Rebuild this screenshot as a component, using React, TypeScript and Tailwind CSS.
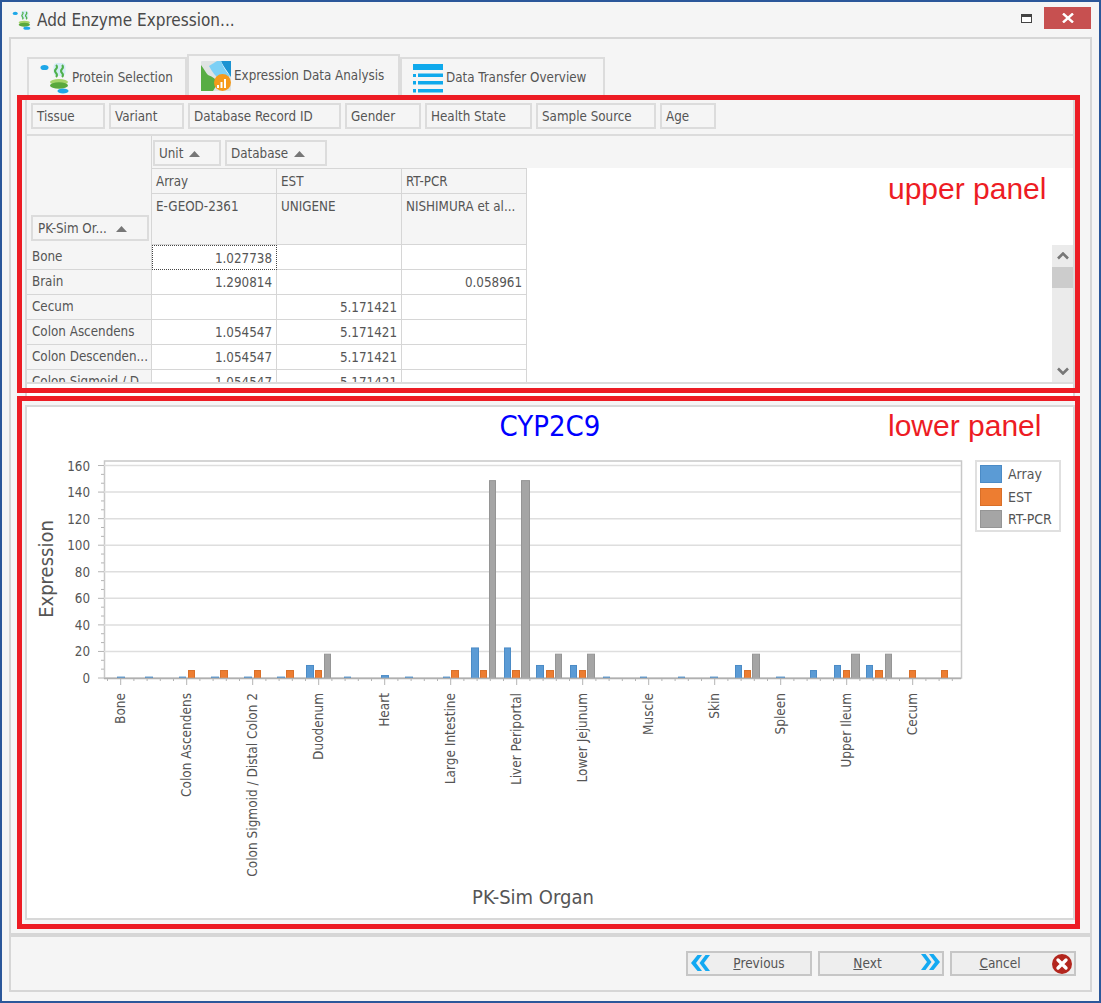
import React from "react";

const font = "font-['DejaVu_Sans','Liberation_Sans',sans-serif] [font-stretch:condensed]";
const cellLine = "border-r border-b border-[#d6d6d6]";

const filters = [
  { label: "Tissue", w: "w-[74px]" },
  { label: "Variant", w: "w-[75px]" },
  { label: "Database Record ID", w: "w-[153px]" },
  { label: "Gender", w: "w-[76px]" },
  { label: "Health State", w: "w-[107px]" },
  { label: "Sample Source", w: "w-[120px]" },
  { label: "Age", w: "w-[56px]" },
];

const rows = [
  ["Bone", "1.027738", "", ""],
  ["Brain", "1.290814", "", "0.058961"],
  ["Cecum", "", "5.171421", ""],
  ["Colon Ascendens", "1.054547", "5.171421", ""],
  ["Colon Descenden...", "1.054547", "5.171421", ""],
  ["Colon Sigmoid / D...", "1.054547", "5.171421", ""],
];

const colors: Record<string, { fill: string; line: string }> = {
  a: { fill: "#5b9bd5", line: "#4b8bc6" },
  e: { fill: "#ed7d31", line: "#d96f28" },
  r: { fill: "#a5a5a5", line: "#959595" },
};

// x, width, series, value
const bars: [number, number, string, number][] = [
  [117, 8, "a", 1.05], [145, 8, "a", 1.05],
  [179, 7, "a", 1.05], [188, 7, "e", 6],
  [211, 8, "a", 1.05], [220, 8, "e", 6],
  [244, 8, "a", 1.05], [254, 7, "e", 6],
  [277, 8, "a", 1.05], [286, 8, "e", 6],
  [306, 8, "a", 9.8], [315, 7, "e", 6], [324, 7, "r", 18.3],
  [344, 7, "a", 1.05], [381, 8, "a", 2.2], [405, 8, "a", 1.05],
  [443, 7, "a", 1.05], [451, 8, "e", 6],
  [471, 8, "a", 23], [480, 7, "e", 6], [489, 7, "r", 149],
  [504, 7, "a", 23], [512, 8, "e", 6], [521, 9, "r", 149],
  [536, 8, "a", 9.8], [546, 8, "e", 6], [555, 7, "r", 18.3],
  [570, 7, "a", 9.8], [579, 7, "e", 6], [587, 8, "r", 18.3],
  [603, 7, "a", 1.05], [640, 7, "a", 1.05], [678, 7, "a", 1.05], [710, 8, "a", 1.05],
  [735, 7, "a", 9.8], [744, 7, "e", 6], [752, 8, "r", 18.3],
  [776, 9, "a", 1.05], [810, 7, "a", 6],
  [834, 7, "a", 9.8], [843, 7, "e", 6], [851, 9, "r", 18.3],
  [866, 7, "a", 9.8], [875, 8, "e", 6], [885, 7, "r", 18.3],
  [909, 7, "e", 6], [941, 7, "e", 6],
];

const categories = [
  "Bone", "Colon Ascendens", "Colon Sigmoid / Distal Colon 2", "Duodenum", "Heart", "Large Intestine",
  "Liver Periportal", "Lower Jejunum", "Muscle", "Skin", "Spleen", "Upper Ileum", "Cecum",
];

const yTicks = [0, 20, 40, 60, 80, 100, 120, 140, 160];
const toY = (v: number) => 678 - v * 1.328;

const SortUp = () => (
  <svg width="11" height="6" viewBox="0 0 11 6" className="shrink-0">
    <path d="M5.5 0 L11 6 H0 Z" fill="#777" />
  </svg>
);

const FieldButton = ({ label, w, sort }: { label: string; w: string; sort?: boolean }) => (
  <div className={`${w} h-[26px] flex items-center gap-[6px] pl-[4px] pt-[2px] border-2 border-[#dcdcdc] bg-[#f5f5f5] shrink-0`}>
    <span className="whitespace-nowrap">{label}</span>
    {sort && <SortUp />}
  </div>
);

const ProteinIcon = ({ w, h }: { w: number; h: number }) => (
  <svg width={w} height={h} viewBox="0 0 28 32">
    <ellipse cx="4" cy="5.5" rx="4" ry="2.6" fill="#1ea7e8" />
    <rect x="13" y="1" width="12" height="13" rx="4" fill="#d3ecf6" />
    <path d="M15.5 3 q2 2 0 4 q-2 2 0 4 q2 2 0 4 M21.5 3 q2 2 0 4 q-2 2 0 4 q2 2 0 4" fill="none" stroke="#4fb04a" strokeWidth="2" />
    <ellipse cx="18.5" cy="20" rx="9" ry="3" fill="#a5d46a" />
    <ellipse cx="18.5" cy="23.5" rx="9" ry="3.2" fill="#5aa83c" />
    <ellipse cx="22.5" cy="29" rx="5.5" ry="2.6" fill="#1ea7e8" />
  </svg>
);

const AnalysisIcon = () => (
  <svg width="30" height="30" viewBox="0 0 30 30">
    <rect width="30" height="30" rx="1" fill="#dfe3e3" />
    <path d="M12 2 H28 V15 C24 12 21 13 18 9 Z" fill="#fff" />
    <path d="M20 0 H30 V16 C27 11 23 7 20 0 Z" fill="#1c93d2" />
    <path d="M8 5 L16 0 H20 C22 6 25 10 29 15 L20 19 C15 16 11 11 8 5 Z" fill="#7cd0f5" />
    <path d="M0 4 C3 8 5 12 7 14 C12 16 15 18 17 22 L12 30 H0 Z" fill="#58ad43" />
    <circle cx="21.5" cy="21.5" r="8.5" fill="#f59a1b" />
    <path d="M16 27v-3h2v3zM19.5 27v-6h2v6zM23 27v-9h2v9z" fill="#fff" />
  </svg>
);

const TransferIcon = () => (
  <svg width="30" height="30" viewBox="0 0 30 30">
    <rect y="1" width="30" height="6" fill="#0fa9ec" />
    <rect y="11" width="3" height="3" fill="#0fa9ec" />
    <rect x="5" y="10.5" width="25" height="3.5" fill="#0fa9ec" />
    <rect y="18" width="3" height="3.5" fill="#0fa9ec" />
    <rect x="5" y="18" width="25" height="3.5" fill="#0fa9ec" />
    <rect y="26" width="3" height="3.5" fill="#0fa9ec" />
    <rect x="5" y="26" width="25" height="3.5" fill="#0fa9ec" />
  </svg>
);

const DoubleChevron = ({ flip }: { flip?: boolean }) => (
  <svg width="19" height="16" viewBox="0 0 19 16" className={flip ? "-scale-x-100" : ""}>
    <path d="M0 0h4.5l6 8-6 8H0l6-8zM8 0h4.5l6.5 8-6.5 8H8l6-8z" fill="#13a9f2" />
  </svg>
);

const Chart = () => (
  <svg width="940" height="478" viewBox="27 440 940 478" className="shrink-0">
    <g fontFamily="'DejaVu Sans','Liberation Sans',sans-serif" style={{ fontStretch: "condensed" }} fill="#555">
      <text x="53" y="569" fontSize="20" textAnchor="middle" transform="rotate(-90 53 569)">Expression</text>
      {yTicks.map((t) => (
        <text key={t} x="90" y={toY(t) + 5} fontSize="13.3" textAnchor="end">{t}</text>
      ))}
      {categories.map((c, i) => (
        <text key={c} x={125 + 66 * i} y="693" fontSize="13.5" textAnchor="end" transform={`rotate(-90 ${125 + 66 * i} 693)`}>{c}</text>
      ))}
      <text x="533" y="904" fontSize="20" textAnchor="middle">PK-Sim Organ</text>
    </g>
    <rect x="104.5" y="461" width="857" height="217" fill="#fff" stroke="#c8c8c8" strokeWidth="1.5" />
    {yTicks.slice(1).map((t) => (
      <line key={t} x1="104" x2="961" y1={toY(t)} y2={toY(t)} stroke="#dedede" strokeWidth="1.5" />
    ))}
    {Array.from({ length: 25 }, (_, i) => toY(i * (20 / 3))).map((y, i) => (
      <line key={i} x1={i % 3 === 0 ? 98 : 101} x2="104" y1={y} y2={y} stroke="#b4b4b4" />
    ))}
    {Array.from({ length: 65 }, (_, i) => 107.5 + 13.2 * i).map((x, i) => (
      <line key={i} x1={x} x2={x} y1="678" y2={(i - 1) % 5 === 0 ? 685 : 681} stroke="#b4b4b4" />
    ))}
    {bars.map(([x, w, s, v], i) => (
      <rect key={i} x={x + 0.5} y={toY(v) + 0.5} width={w - 1} height={678 - toY(v)} fill={colors[s].fill} stroke={colors[s].line} />
    ))}
    <line x1="104" x2="961" y1="678.5" y2="678.5" stroke="#b0b0b0" strokeWidth="1.5" />
  </svg>
);

const Legend = () => (
  <div className="w-[86px] h-[72px] mt-[20px] ml-[8px] border-2 border-[#e0e0e0] flex flex-col gap-[4.5px] pt-[3px] pl-[3px] shrink-0 text-[14px]">
    {[
      ["Array", "bg-[#5b9bd5] border-[#4b8bc6]"],
      ["EST", "bg-[#ed7d31] border-[#d96f28]"],
      ["RT-PCR", "bg-[#a5a5a5] border-[#959595]"],
    ].map(([name, swatch]) => (
      <div key={name} className="flex items-center gap-[6px] h-[18px]">
        <div className={`w-[22px] h-[18px] border ${swatch}`} />
        <span>{name}</span>
      </div>
    ))}
  </div>
);

const Tab = ({ label, icon, active, w }: { label: string; icon: React.ReactNode; active?: boolean; w: string }) => (
  <div
    className={`${w} flex items-center gap-[3px] border-2 border-b-0 border-[#dcdcdc] ${
      active ? "h-[42px] pl-[12px]" : "h-[39px] pl-[11px]"
    }`}
  >
    {icon}
    <span className="whitespace-nowrap">{label}</span>
  </div>
);

const DialogButton = ({ children, left, right, pad }: { children: React.ReactNode; left?: React.ReactNode; right?: React.ReactNode; pad: string }) => (
  <div className={`relative w-[126px] h-[25px] border-2 border-[#c6c6c6] bg-[#eeeeee] flex items-center justify-center text-[13.5px] ${pad}`}>
    {left && <div className="absolute left-[3px] top-[2px]">{left}</div>}
    <span>{children}</span>
    {right && <div className="absolute right-[2px] top-[1px]">{right}</div>}
  </div>
);

export default function App() {
  return (
    <div className={`relative w-[1101px] h-[1003px] overflow-hidden bg-[#f5f5f5] shadow-[inset_0_0_0_2px_#2b579a] text-[13.3px] leading-none text-[#555555] ${font}`}>
      {/* title bar */}
      <div className="h-[37px] flex items-center pl-[12px] pr-[10px] pt-[3px]">
        <ProteinIcon w={19} h={20} />
        <span className="ml-[6px] text-[17px] text-[#4a4a4a]">Add Enzyme Expression...</span>
        <div className="ml-auto mr-[12px] w-[11px] h-[9px] border border-t-[3px] border-[#444] bg-white mb-[3px]" />
        <div className="w-[47px] h-[22px] bg-[#c75050] flex items-center justify-center mb-[4px]">
          <svg width="12" height="10" viewBox="0 0 12 10">
            <path d="M1 0.5 L11 9.5 M11 0.5 L1 9.5" stroke="#fff" strokeWidth="2.4" />
          </svg>
        </div>
      </div>

      {/* main panel */}
      <div className="ml-[9px] w-[1083px] h-[898px] border-2 border-[#d6d6d6]">
        <div className="h-[57px] pl-[16px] pt-[15px] flex items-end">
          <Tab w="w-[160px]" label="Protein Selection" icon={<ProteinIcon w={29} h={32} />} />
          <Tab w="w-[213px]" label="Expression Data Analysis" icon={<AnalysisIcon />} active />
          <Tab w="w-[205px]" label="Data Transfer Overview" icon={<TransferIcon />} />
        </div>

        <div className="ml-[14px] w-[1050px]">
          {/* upper panel */}
          <div className="h-[300px] border-x-2 border-[#d8d8d8] bg-white flex flex-col">
            <div className="h-[40px] shrink-0 bg-[#f5f5f5] border-b-2 border-[#dcdcdc] pl-[4px] pt-[7px] flex gap-[4px]">
              {filters.map((f) => (
                <FieldButton key={f.label} label={f.label} w={f.w} />
              ))}
            </div>
            <div className="h-[109px] shrink-0 flex">
              <div className="w-[125px] bg-[#f5f5f5] flex items-end pl-[4px] pb-[4px] border-r border-[#d6d6d6]">
                <div className="w-[118px] h-[26px] flex items-center justify-between pl-[5px] pr-[20px] pt-[2px] border-2 border-[#dcdcdc]">
                  <span>PK-Sim Or...</span>
                  <SortUp />
                </div>
              </div>
              <div className="flex-1 flex flex-col">
                <div className="h-[33px] bg-[#f5f5f5] pl-[1px] pt-[4px] flex gap-[4px]">
                  <FieldButton label="Unit" w="w-[68px]" sort />
                  <FieldButton label="Database" w="w-[102px]" sort />
                </div>
                <div className="grid grid-cols-[125px_125px_125px] grid-rows-[25px_51px] w-[375px] bg-[#f5f5f5] border-t border-[#d6d6d6]">
                  {["Array", "EST", "RT-PCR"].map((h) => (
                    <div key={h} className={`${cellLine} pl-[4px] pt-[6px]`}>{h}</div>
                  ))}
                  {["E-GEOD-2361", "UNIGENE", "NISHIMURA et al..."].map((h) => (
                    <div key={h} className={`${cellLine} pl-[4px] pt-[6px] whitespace-nowrap overflow-hidden`}>{h}</div>
                  ))}
                </div>
              </div>
            </div>
            <div className="h-[139px] shrink-0 flex border-b-2 border-[#dcdcdc]">
              <div className="w-[500px] grid grid-cols-[125px_125px_125px_125px] auto-rows-[25px] overflow-hidden">
                {rows.map((r) =>
                  r.map((v, i) =>
                    i === 0 ? (
                      <div key={r[0]} className={`${cellLine} bg-[#f5f5f5] pl-[5px] pt-[5px] whitespace-nowrap overflow-hidden`}>{v}</div>
                    ) : (
                      <div
                        key={r[0] + i}
                        className={`text-right pr-[4px] pt-[6px] ${
                          r[0] === "Bone" && i === 1 ? "border border-dotted border-[#444]" : cellLine
                        }`}
                      >
                        {v}
                      </div>
                    )
                  )
                )}
              </div>
              <div className="ml-auto w-[21px] bg-[#ebebeb] flex flex-col items-center justify-between relative">
                <svg width="12" height="8" viewBox="0 0 12 8" className="mt-[7px]">
                  <path d="M1 6.5 L6 1.5 L11 6.5" fill="none" stroke="#777" strokeWidth="2.6" />
                </svg>
                <div className="absolute top-[22px] left-0 w-full h-[21px] bg-[#cccccc]" />
                <svg width="12" height="8" viewBox="0 0 12 8" className="mb-[7px]">
                  <path d="M1 1.5 L6 6.5 L11 1.5" fill="none" stroke="#777" strokeWidth="2.6" />
                </svg>
              </div>
            </div>
          </div>

          {/* lower panel */}
          <div className="mt-[9px] h-[515px] border-2 border-[#d8d8d8] bg-white flex flex-col">
            <div className="h-[33px] text-center text-[29px] text-[#0000ff] pt-[5px]">CYP2C9</div>
            <div className="flex items-start">
              <Chart />
              <Legend />
            </div>
          </div>
        </div>
      </div>

      {/* button bar */}
      <div className="ml-[9px] w-[1083px] h-[57px] border-2 border-[#d6d6d6] flex items-start justify-end gap-[6px] pt-[14px] pr-[14px]">
        <DialogButton pad="pl-[20px]" left={<DoubleChevron flip />}><span className="underline">P</span>revious</DialogButton>
        <DialogButton pad="pr-[27px]" right={<DoubleChevron />}><span className="underline">N</span>ext</DialogButton>
        <DialogButton
          pad="pr-[26px]"
          right={
            <svg width="20" height="20" viewBox="0 0 20 20">
              <circle cx="10" cy="10" r="10" fill="#b3261e" />
              <path d="M6 6 L14 14 M14 6 L6 14" stroke="#fff" strokeWidth="3.4" strokeLinecap="round" />
            </svg>
          }
        >
          <span className="underline">C</span>ancel
        </DialogButton>
      </div>

      {/* annotation overlay */}
      <div className="absolute left-[17px] top-[95px] w-[1063px] h-[298px] border-[5px] border-[#ed1c24]" />
      <div className="absolute left-[17px] top-[396px] w-[1063px] h-[533px] border-[5px] border-[#ed1c24]" />
      <div className="absolute left-[888px] top-[174px] text-[30px] text-[#ed1c24] font-['Liberation_Sans',sans-serif] [font-stretch:normal]">upper panel</div>
      <div className="absolute left-[888px] top-[411px] text-[30px] text-[#ed1c24] font-['Liberation_Sans',sans-serif] [font-stretch:normal]">lower panel</div>
    </div>
  );
}
